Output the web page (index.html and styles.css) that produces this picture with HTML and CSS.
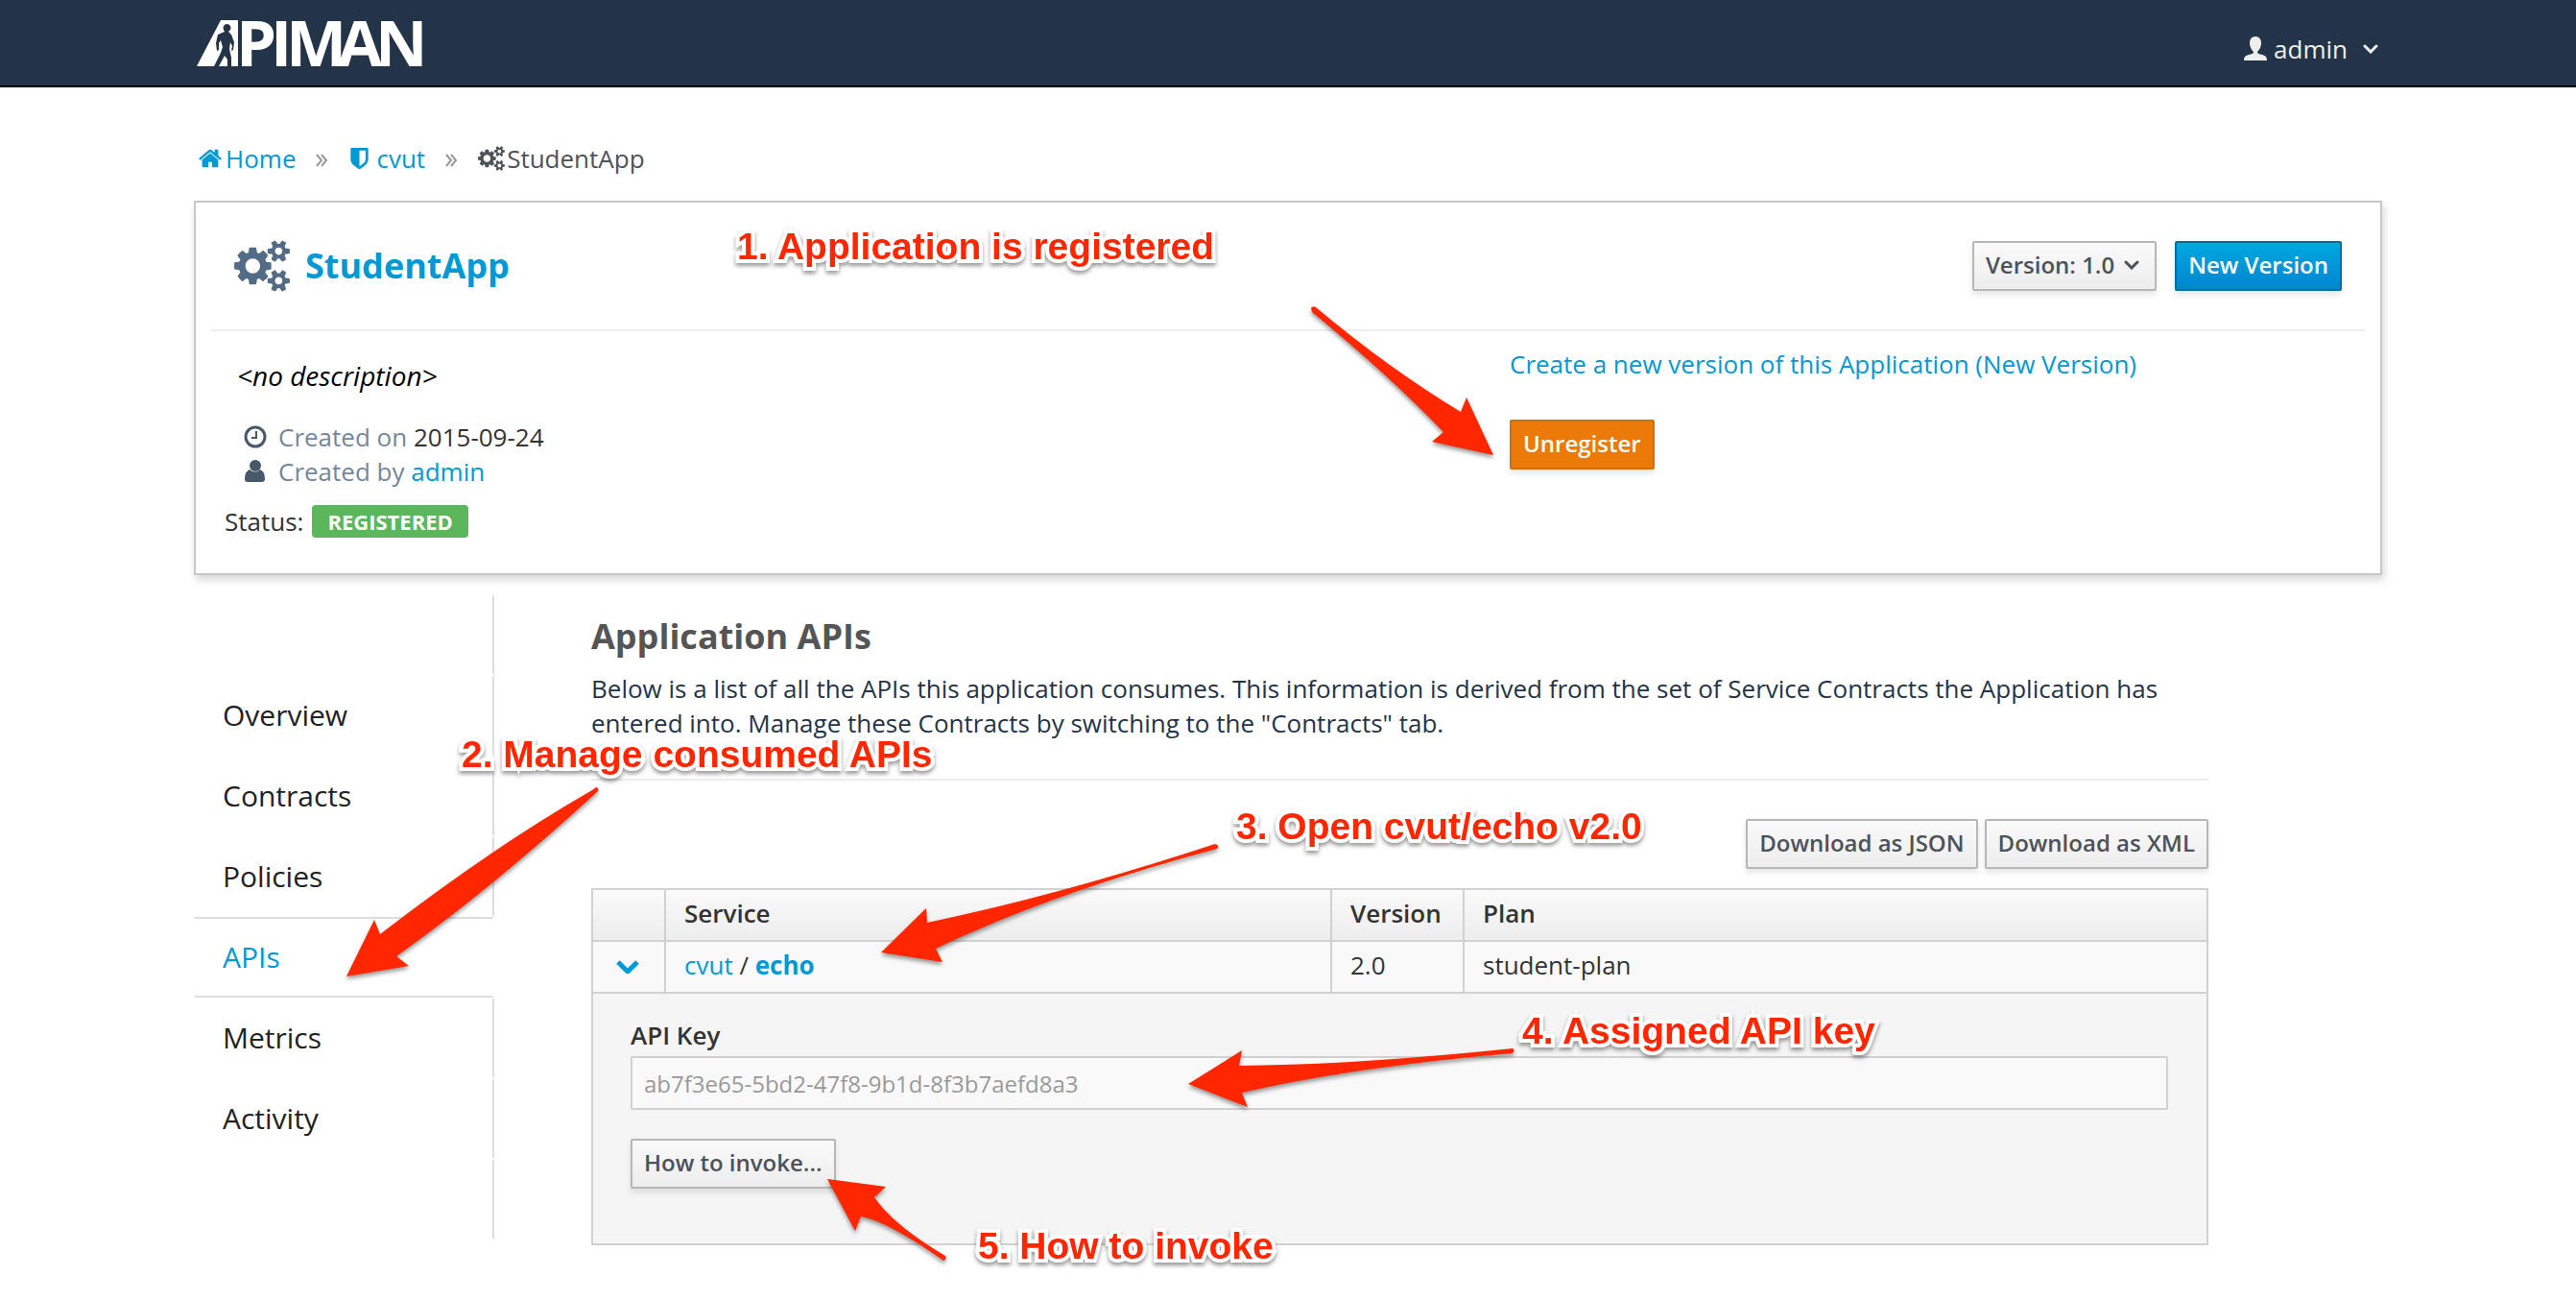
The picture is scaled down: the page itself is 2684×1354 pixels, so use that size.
FILE: index.html
```html
<!DOCTYPE html>
<html lang="en">
<head>
<meta charset="utf-8">
<meta name="viewport" content="width=device-width, initial-scale=1">
<title>apiman - StudentApp</title>
<link rel="stylesheet" href="styles.css">
</head>
<body>
<svg class="sprite" aria-hidden="true">
  <symbol id="cogs" viewBox="0 0 1920 1792"><path d="M896 896q0-106-75-181t-181-75-181 75-75 181 75 181 181 75 181-75 75-181zm768 512q0-52-38-90t-90-38-90 38-38 90q0 53 37.5 90.5t90.5 37.5 90.5-37.5 37.5-90.5zm0-1024q0-52-38-90t-90-38-90 38-38 90q0 53 37.5 90.5t90.5 37.5 90.5-37.5 37.5-90.5zm-384 421v185q0 10-7 19.5t-16 10.5l-155 24q-11 35-32 76 34 48 90 115 7 11 7 20 0 12-7 19-23 30-82.5 89.5t-78.5 59.5q-11 0-21-7l-115-90q-37 19-77 31-11 108-23 155-7 24-30 24h-186q-11 0-20-7.5t-10-17.5l-23-153q-34-10-75-31l-118 89q-7 7-20 7-11 0-21-8-144-133-144-160 0-9 7-19 10-14 41-53t47-61q-23-44-35-82l-152-24q-10-1-17-9.5t-7-19.5v-185q0-10 7-19.5t16-10.5l155-24q11-35 32-76-34-48-90-115-7-11-7-20 0-12 7-20 22-30 82-89t79-59q11 0 21 7l115 90q34-18 77-32 11-108 23-154 7-24 30-24h186q11 0 20 7.5t10 17.5l23 153q34 10 75 31l118-89q8-7 20-7 11 0 21 8 144 133 144 160 0 8-7 19-12 16-42 54t-45 60q23 48 34 82l152 23q10 2 17 10.5t7 19.5zm640 533v140q0 16-149 31-12 27-30 52 51 113 51 138 0 4-4 7-122 71-124 71-8 0-46-47t-52-68q-20 2-30 2t-30-2q-14 21-52 68t-46 47q-2 0-124-71-4-3-4-7 0-25 51-138-18-25-30-52-149-15-149-31v-140q0-16 149-31 13-29 30-52-51-113-51-138 0-4 4-7 4-2 35-20t59-34 30-16q8 0 46 46.5t52 67.5q20-2 30-2t30 2q51-71 92-112l6-2q4 0 124 70 4 3 4 7 0 25-51 138 17 23 30 52 149 15 149 31zm0-1024v140q0 16-149 31-12 27-30 52 51 113 51 138 0 4-4 7-122 71-124 71-8 0-46-47t-52-68q-20 2-30 2t-30-2q-14 21-52 68t-46 47q-2 0-124-71-4-3-4-7 0-25 51-138-18-25-30-52-149-15-149-31v-140q0-16 149-31 13-29 30-52-51-113-51-138 0-4 4-7 4-2 35-20t59-34 30-16q8 0 46 46.5t52 67.5q20-2 30-2t30 2q51-71 92-112l6-2q4 0 124 70 4 3 4 7 0 25-51 138 17 23 30 52 149 15 149 31z"/></symbol>
  <symbol id="angles" viewBox="0 0 14 14"><path d="M2 1l5 6-5 6M7 1l5 6-5 6" fill="none" stroke="currentColor" stroke-width="2"/></symbol>
  <symbol id="chevron" viewBox="0 0 16 10"><path d="M2 2l6 6 6-6" fill="none" stroke="currentColor" stroke-width="3" stroke-linecap="round"/></symbol>
</svg>

<header class="navbar">
  <div class="container navbar-inner">
    <a class="brand" href="#" aria-label="apiman">
      <svg class="brand-logo" viewBox="0 0 238 50">
        <path d="M1 49L26 1h18v48z" fill="#fff"/>
        <path d="M36 11a4 4 0 1 0-7 0l1 2-7 3-2 9 1 8 2-1v-7l2-3 2 7-2 6-7 14h5l6-11 3 4v7h4v-9l-2-9 1-7 2 4-1 5 2-1 1-8-3-8-3-3z" fill="#243448"/>
        <text class="brand-text" x="42 78 94 148 187" y="49">PIMAN</text>
      </svg>
    </a>
    <a class="user-menu" href="#">
      <svg class="user-icon" viewBox="0 0 24 25"><path d="M12 0c4 0 6 3 6 7 0 4-2 7-4 9 0 2 2 2 5 3 4 1 5 3 5 6H0c0-3 1-5 5-6 3-1 5-1 5-3-2-2-4-5-4-9 0-4 2-7 6-7z" fill="currentColor"/></svg>
      <span>admin</span>
      <svg class="chevron"><use href="#chevron"/></svg>
    </a>
  </div>
</header>

<div class="container page">
  <nav class="breadcrumb" aria-label="Breadcrumb">
    <a class="crumb crumb-home" href="#"><svg class="icon-home" viewBox="0 0 1792 1792"><path d="M1472 992v480q0 26-19 45t-45 19h-384v-384h-256v384h-384q-26 0-45-19t-19-45v-480q0-1 .5-3t.5-3l575-474 575 474q1 2 1 6zm223-69l-62 74q-8 9-21 11h-3q-13 0-21-7l-692-577-692 577q-12 8-24 7-13-2-21-11l-62-74q-8-10-7-23.5t11-21.5l719-599q32-26 76-26t76 26l244 204v-195q0-14 9-23t23-9h192q14 0 23 9t9 23v408l219 182q10 8 11 21.5t-7 23.5z" fill="currentColor"/></svg>Home</a>
    <svg class="crumb-sep"><use href="#angles"/></svg>
    <a class="crumb crumb-org" href="#"><svg class="icon-shield" viewBox="256 128 1280 1536"><path d="M1344 960v-640h-448v1137q119-63 213-137 235-184 235-360zm192-768v768q0 86-33.5 170.5t-83 150-118 127.5-126.5 103-121 77.5-89.5 49.5-42.5 20q-12 6-26 6t-26-6q-16-7-42.5-20t-89.5-49.5-121-77.5-126.5-103-118-127.5-83-150-33.5-170.5v-768q0-26 19-45t45-19h1152q26 0 45 19t19 45z" fill="currentColor"/></svg>cvut</a>
    <svg class="crumb-sep"><use href="#angles"/></svg>
    <span class="crumb crumb-current"><svg class="icon-cogs-small"><use href="#cogs"/></svg>StudentApp</span>
  </nav>

  <section class="card">
    <div class="card-head">
      <svg class="icon-cogs"><use href="#cogs"/></svg>
      <h1 class="card-title"><a href="#">StudentApp</a></h1>
      <button class="btn btn-version" type="button">Version: 1.0 <svg class="chevron"><use href="#chevron"/></svg></button>
      <button class="btn btn-primary" type="button">New Version</button>
    </div>
    <div class="card-body">
      <div class="card-info">
        <p class="description">&lt;no description&gt;</p>
        <ul class="meta">
          <li><svg class="meta-icon" viewBox="0 0 24 24"><circle cx="12" cy="12" r="10" fill="none" stroke="currentColor" stroke-width="3"/><path d="M13 6v7H8" fill="none" stroke="currentColor" stroke-width="2"/></svg><span>Created on <span class="meta-value">2015-09-24</span></span></li>
          <li><svg class="meta-icon" viewBox="0 0 24 24"><circle cx="12" cy="6" r="6" fill="currentColor"/><path d="M6 10q-5 2-5 10 0 3 3 3h15q3 0 3-3 0-8-5-10-5 5-11 0z" fill="currentColor"/></svg><span>Created by <a href="#">admin</a></span></li>
        </ul>
        <p class="status">Status: <span class="badge">REGISTERED</span></p>
      </div>
      <div class="card-actions">
        <a href="#">Create a new version of this Application (New Version)</a>
        <button class="btn btn-warning" type="button">Unregister</button>
      </div>
    </div>
  </section>

  <div class="columns">
    <nav class="tabs" aria-label="Application">
      <ul>
        <li></li>
        <li><a href="#">Overview</a></li>
        <li><a href="#">Contracts</a></li>
        <li><a href="#">Policies</a></li>
        <li class="active"><a href="#" aria-current="page">APIs</a></li>
        <li><a href="#">Metrics</a></li>
        <li><a href="#">Activity</a></li>
        <li></li>
      </ul>
    </nav>

    <main class="content">
      <h2>Application APIs</h2>
      <p class="lead">Below is a list of all the APIs this application consumes. This information is derived from the set of Service Contracts the Application has entered into. Manage these Contracts by switching to the "Contracts" tab.</p>
      <hr>
      <div class="toolbar">
        <button class="btn" type="button">Download as JSON</button>
        <button class="btn" type="button">Download as XML</button>
      </div>
      <table class="apis">
        <colgroup><col class="col-toggle"><col class="col-service"><col class="col-version"><col></colgroup>
        <thead>
          <tr><th></th><th>Service</th><th>Version</th><th>Plan</th></tr>
        </thead>
        <tbody>
          <tr>
            <td class="toggle"><button class="toggle-btn" type="button" aria-label="Collapse" aria-expanded="true"><svg viewBox="0 0 24 14"><path d="M2 2l10 10L22 2" fill="none" stroke="currentColor" stroke-width="5"/></svg></button></td>
            <td><a href="#">cvut</a> / <a class="strong" href="#">echo</a></td>
            <td>2.0</td>
            <td>student-plan</td>
          </tr>
          <tr>
            <td class="details" colspan="4">
              <label for="apikey">API Key</label>
              <input id="apikey" type="text" value="ab7f3e65-5bd2-47f8-9b1d-8f3b7aefd8a3" readonly>
              <button class="btn" type="button">How to invoke...</button>
            </td>
          </tr>
        </tbody>
      </table>
    </main>
  </div>

  <div class="notes">
    <svg class="arrows" viewBox="202 91 2280 1263">
      <path d="M1371 320Q1368 318 1366 321L1367 325Q1444 388 1504 450L1492 460 1556 474 1528 414 1522 429Q1446 383 1371 320z"/>
      <path d="M623 824Q624 820 621 820L617 823Q514 882 396 973L390 958 361 1017 426 1006 413 996Q514 924 623 824z"/>
      <path d="M1268 884Q1271 880 1266 879 1105 932 966 961L965 946 918 992 982 1002 975 988Q1096 930 1268 884z"/>
      <path d="M1576 1097Q1579 1093 1576 1092 1411 1109 1291 1110L1294 1094 1238 1129 1300 1153 1294 1138Q1411 1111 1576 1097z"/>
      <path d="M983 1313Q987 1312 985 1308 931 1276 911 1247L923 1236 862 1228 891 1282 897 1267Q925 1272 983 1313z"/>
    </svg>
    <span class="note note-1">1. Application is registered</span>
    <span class="note note-2">2. Manage consumed APIs</span>
    <span class="note note-3">3. Open cvut/echo v2.0</span>
    <span class="note note-4">4. Assigned API key</span>
    <span class="note note-5">5. How to invoke</span>
  </div>
</div>
</body>
</html>
```
FILE: styles.css
```css
* { box-sizing: border-box; }

body {
  margin: 0;
  background: #fff;
  color: #333;
  font: 26px/36px "Open Sans", "Noto Sans", sans-serif;
}

h1, h2, p, ul { margin: 0; padding: 0; font-size: inherit; }
ul { list-style: none; }
a { color: #0099d3; text-decoration: none; }
svg { display: block; flex: none; }
.sprite { position: absolute; width: 0; height: 0; }

.container { max-width: 2280px; margin: 0 auto; }

/* Top bar */
.navbar { background: #243448; border-bottom: 2px solid #000; }
.navbar-inner { display: flex; justify-content: space-between; align-items: center; min-height: 89px; }
.brand-logo { width: 238px; height: 50px; margin-left: 2px; overflow: visible; }
.brand-text { font: bold 67px "Open Sans", "Noto Sans", sans-serif; fill: #fff; }
.user-menu { display: flex; align-items: center; gap: 7px; margin: 12px 4px 0 0; color: #eee; }
.user-icon { width: 24px; height: 25px; }
.chevron { width: 16px; height: 10px; }
.user-menu .chevron { margin-left: 9px; }

/* Breadcrumb */
.page { position: relative; padding-bottom: 57px; }
.breadcrumb { display: flex; align-items: center; padding: 56px 0 26px 4px; }
.crumb { display: flex; align-items: center; }
.crumb-current { color: #4d5258; }
.crumb-sep { width: 14px; height: 14px; margin: 4px 21px 0 20px; color: #999; }
.icon-home { width: 26px; height: 26px; margin-right: 3px; }
.icon-shield { width: 19px; height: 22px; margin: 0 8px 0 2px; }
.icon-cogs-small { width: 28px; height: 26px; margin-right: 2px; fill: currentColor; }

/* Application card */
.card { border: 2px solid #c8c8c8; padding: 0 16px; box-shadow: 2px 5px 8px rgba(0, 0, 0, .16); }
.card-head { display: flex; align-items: center; padding: 39px 24px; border-bottom: 2px solid #ededed; }
.icon-cogs { width: 58px; height: 54px; fill: #546b85; }
.card-title { margin: 0 auto 0 16px; font-size: 36px; line-height: 50px; }
.card-body { display: grid; grid-template-columns: 1353fr 891fr; }
.card-info { padding: 28px 0 36px 14px; }
.description { padding-left: 13px; margin-bottom: 28px; color: #000; font-size: 28px; font-style: italic; }
.meta { padding-left: 20px; color: #75879b; }
.meta li { display: flex; align-items: center; gap: 12px; }
.meta-icon { width: 24px; height: 24px; color: #465869; }
.meta-value { color: #333; }
.status { display: flex; align-items: center; gap: 9px; margin-top: 16px; }
.badge { padding: 0 16px; border-radius: 4px; background: #5cb75c; color: #fff; font-size: 22px; font-weight: 700; line-height: 34px; }
.card-actions { display: flex; flex-direction: column; align-items: flex-start; gap: 40px; padding-top: 16px; }

/* Buttons */
.btn {
  height: 52px;
  padding: 0 12px 2px;
  border: 2px solid #b7b7b7;
  border-radius: 2px;
  background: linear-gradient(#fafafa, #ededed);
  box-shadow: 0 4px 6px rgba(3, 3, 3, .1);
  color: #4d5258;
  font: 600 24px/34px "Open Sans", "Noto Sans", sans-serif;
}
.btn-version { display: flex; align-items: center; gap: 10px; padding-right: 16px; margin-right: 19px; }
.btn-primary { border-color: #006e9c; background: linear-gradient(#00a8e1, #0085cf); color: #fff; }
.btn-warning { border-color: #d56e07; background: #ec7a08; color: #fff; }

/* Tabs and content */
.columns { display: grid; grid-template-columns: 313px minmax(0, 1fr); column-gap: 101px; align-items: start; margin-top: 20px; padding-right: 181px; }
.tabs li { display: flex; align-items: center; height: 84px; padding-left: 28px; border: 2px solid transparent; border-right-color: #ddd; font-size: 30px; }
.tabs .active { border-color: #ddd transparent; }
.tabs a { color: #222; }
.tabs .active a { color: #0099d3; }

.content { padding-top: 19px; }
h2 { margin-bottom: 11px; color: #555; font-size: 36px; font-weight: 700; line-height: 50px; }
.lead { color: #243448; }
hr { height: 2px; margin: 40px 0; border: 0; background: #ededed; }
.toolbar { display: flex; justify-content: flex-end; gap: 7px; margin-bottom: 20px; }

.apis { width: 100%; border-collapse: collapse; table-layout: fixed; }
.col-toggle { width: 76px; }
.col-service { width: 694px; }
.col-version { width: 138px; }
.apis th, .apis td { height: 54px; padding: 0 19px 4px; border: 2px solid #d1d1d1; text-align: left; }
.apis th { background: linear-gradient(#fafafa, #ededed); font-weight: 600; }
.apis td { background: #f9f9f9; }
.apis .toggle { padding: 0 3px 0 0; }
.toggle-btn { display: block; margin: 0 auto; padding: 0; border: 0; background: none; color: #0099d3; }
.toggle-btn svg { width: 24px; height: 14px; }
.strong { font-weight: 700; }
.apis .details { padding: 25px 40px 57px 39px; background: #f5f5f5; }
.details label { display: block; margin-bottom: 4px; font-weight: 600; }
.details input {
  display: block;
  width: 100%;
  height: 56px;
  margin-bottom: 30px;
  padding: 0 12px;
  border: 2px solid #d1d1d1;
  border-radius: 2px;
  background: #f9f9f9;
  color: #999;
  font: 24px/34px "Open Sans", "Noto Sans", sans-serif;
}
.details .btn { display: block; }

/* Callouts drawn over the page */
.notes { position: absolute; top: 0; left: 0; width: 2280px; height: 1263px; pointer-events: none; }
.arrows { width: 2280px; height: 1263px; fill: #ff2600; filter: drop-shadow(0 3px 2px rgba(0, 0, 0, .4)); }
.note {
  position: absolute;
  color: #ff2600;
  font: bold 39px/48px "Liberation Sans", Arial, sans-serif;
  white-space: nowrap;
  -webkit-text-stroke: 8px #fff;
  paint-order: stroke fill;
  stroke-linejoin: round;
  filter: drop-shadow(0 3px 2px rgba(0, 0, 0, .4));
}
.note-1 { left: 566px; top: 142px; }
.note-2 { left: 279px; top: 671px; }
.note-3 { left: 1086px; top: 746px; }
.note-4 { left: 1384px; top: 959px; }
.note-5 { left: 817px; top: 1183px; }
```
